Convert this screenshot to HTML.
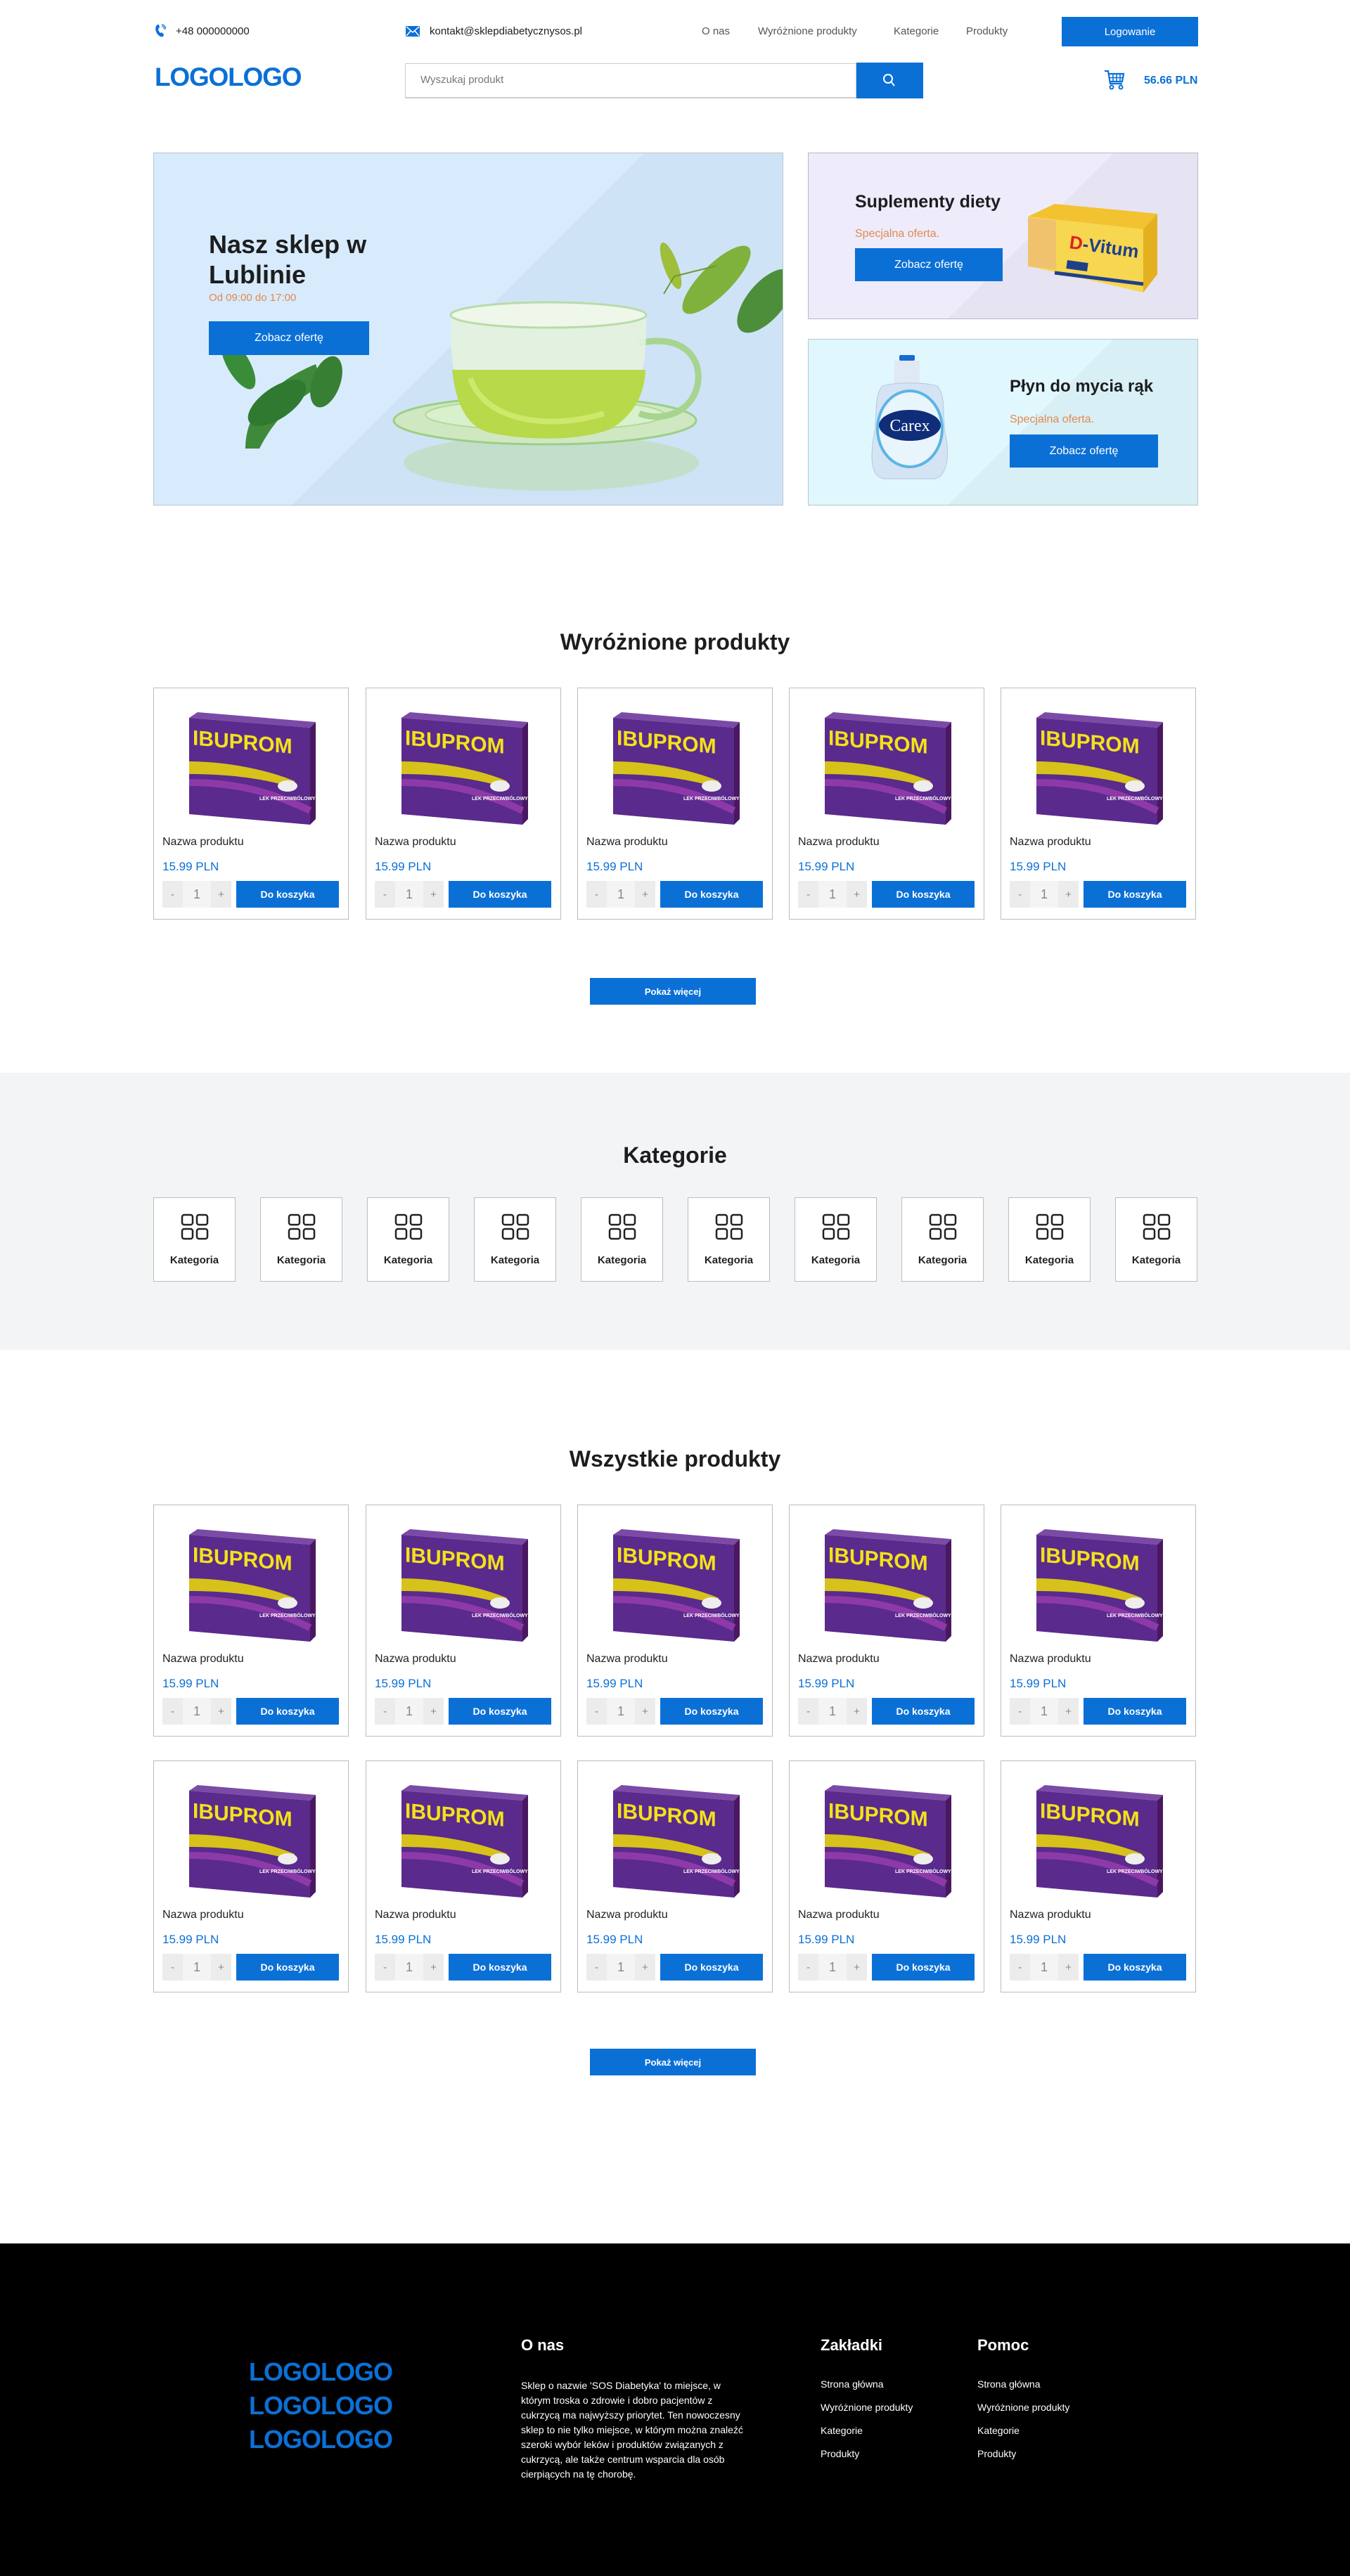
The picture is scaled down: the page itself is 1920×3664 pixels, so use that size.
<!DOCTYPE html>
<html><head><meta charset="utf-8"><style>
*{margin:0;padding:0;box-sizing:border-box}
body{width:1920px;height:3664px;position:relative;background:#fff;font-family:"Liberation Sans",Arial,sans-serif;color:#1d1d1f;overflow:hidden}
.a{position:absolute}
.btn{position:absolute;background:#0b70d6;color:#fff;display:flex;align-items:center;justify-content:center;font-size:15px}
.nav{position:absolute;top:36px;font-size:15px;color:#555}
.card{position:absolute;width:278px;height:330px;border:1px solid #bdbdbd;background:#fff}
.card svg{position:absolute;left:50px;top:34px}
.card .n{position:absolute;left:12px;top:210px;font-size:16px;color:#222}
.card .p{position:absolute;left:12px;top:244px;font-size:17px;color:#0b70d6}
.card .m,.card .q,.card .pl{position:absolute;top:274px;height:38px;display:flex;align-items:center;justify-content:center;color:#888;font-size:15px}
.card .m{left:12px;width:29px;background:#ececec}
.card .q{left:41px;width:40px;background:#f4f4f4;font-size:18px}
.card .pl{left:81px;width:29px;background:#ececec}
.card .b{position:absolute;left:117px;top:274px;width:146px;height:38px;background:#0b70d6;color:#fff;font-size:14px;font-weight:bold;display:flex;align-items:center;justify-content:center}
.cat{position:absolute;top:1703px;width:117px;height:120px;border:1px solid #bdbdbd;background:#fff}
.cat svg{position:absolute;left:38px;top:22px}
.cat span{position:absolute;left:0;right:0;top:80px;text-align:center;font-size:15px;font-weight:bold;color:#222}
h2{position:absolute;left:0;width:1920px;text-align:center;font-size:32px;font-weight:600;color:#1d1d1f}
.fl{position:absolute;font-size:14px;color:#fff}
</style></head><body>

<svg class="a" style="left:220px;top:34px" width="16" height="20" viewBox="0 0 16 20"><path d="M4 1 C1 3 0 8 3 13 C6 18 10 19 12 18 L13 15 L10 12 L8 13 C6 11 5 9 5 7 L7 5 L6 1 Z" fill="#0b70d6"/><path d="M10 3 a5 5 0 0 1 4 5 M10 0.5 a8 8 0 0 1 6 7" stroke="#0b70d6" fill="none" stroke-width="1.2"/></svg>
<div class="a" style="left:250px;top:36px;font-size:15px">+48 000000000</div>
<svg class="a" style="left:577px;top:37px" width="20" height="15" viewBox="0 0 20 15"><rect width="20" height="15" fill="#0b70d6"/><path d="M1 1 L10 9 L19 1 M1 14 L7 7 M19 14 L13 7" stroke="#fff" stroke-width="1.5" fill="none"/></svg>
<div class="a" style="left:611px;top:36px;font-size:15px">kontakt@sklepdiabetycznysos.pl</div>
<div class="nav" style="left:998px">O nas</div>
<div class="nav" style="left:1078px">Wyróżnione produkty</div>
<div class="nav" style="left:1271px">Kategorie</div>
<div class="nav" style="left:1374px">Produkty</div>
<div class="btn" style="left:1510px;top:24px;width:194px;height:42px;font-size:15px">Logowanie</div>

<div class="a" style="left:220px;top:89px;font-size:37px;font-weight:bold;color:#0b70d6;letter-spacing:-1.2px">LOGOLOGO</div>
<div class="a" style="left:576px;top:90px;width:642px;height:50px;border:1px solid #ccc;border-bottom:2px solid #ccc"></div>
<div class="a" style="left:598px;top:105px;font-size:15px;color:#777">Wyszukaj produkt</div>
<div class="a" style="left:1218px;top:89px;width:95px;height:51px;background:#0b70d6"></div>
<svg class="a" style="left:1255px;top:104px" width="20" height="22" viewBox="0 0 20 22"><circle cx="8" cy="8" r="6" stroke="#fff" stroke-width="2" fill="none"/><path d="M12.5 12.5 L17 18" stroke="#fff" stroke-width="2"/></svg>
<svg class="a" style="left:1570px;top:99px" width="30" height="30" viewBox="0 0 30 30"><path d="M1 2 H6 L9 20 H26" stroke="#0b70d6" stroke-width="2.2" fill="none"/><path d="M7 6 H28 L26 17 H9" stroke="#0b70d6" stroke-width="2.2" fill="none"/><path d="M13 6 V17 M18 6 V17 M23 6 V17 M8 11.5 H27" stroke="#0b70d6" stroke-width="1.6"/><circle cx="11" cy="25" r="2.5" stroke="#0b70d6" stroke-width="2" fill="none"/><circle cx="24" cy="25" r="2.5" stroke="#0b70d6" stroke-width="2" fill="none"/></svg>
<div class="a" style="left:1627px;top:106px;font-size:16px;color:#0b70d6;font-weight:bold">56.66 PLN</div>

<div class="a" style="left:218px;top:217px;width:896px;height:502px;border:1px solid #b9c3cc;background:linear-gradient(135deg,#d8ebfd 0%,#d8ebfd 50%,#cfe3f6 50%,#cfe3f6 100%);overflow:hidden">
<svg class="a" style="left:0;top:0" width="896" height="502" viewBox="0 0 896 502">
<ellipse cx="565" cy="440" rx="210" ry="40" fill="#b8dba0" opacity="0.5"/>
<path d="M130 420 C130 360 180 320 230 300 L240 330 C200 350 170 380 150 420 Z" fill="#3f8a3a"/>
<ellipse cx="175" cy="355" rx="48" ry="22" transform="rotate(-35 175 355)" fill="#2f7a30"/>
<ellipse cx="120" cy="300" rx="40" ry="16" transform="rotate(60 120 300)" fill="#3a8d38"/>
<ellipse cx="245" cy="325" rx="38" ry="20" transform="rotate(-70 245 325)" fill="#377f32"/>
<ellipse cx="556" cy="380" rx="215" ry="34" fill="#cfe8c2" stroke="#9ccf86" stroke-width="3"/>
<ellipse cx="556" cy="372" rx="170" ry="22" fill="#d9f0cc" stroke="#b0d99a" stroke-width="2"/>
<path d="M690 270 C760 255 785 300 770 340 C755 375 715 380 690 370" stroke="#a7d48e" stroke-width="9" fill="none"/>
<path d="M422 230 C420 300 430 360 470 390 C520 410 600 410 650 390 C690 360 702 300 700 230 Z" fill="#e4f2df" opacity="0.9"/>
<path d="M424 308 C430 365 450 392 480 398 C540 410 610 408 650 392 C685 370 698 340 699 308 Z" fill="#b7d94a"/>
<path d="M450 320 C470 380 560 395 640 370" stroke="#d7ee7a" stroke-width="8" fill="none" opacity="0.7"/>
<ellipse cx="561" cy="230" rx="139" ry="18" fill="#eef7ea" stroke="#b7dca8" stroke-width="3"/>
<ellipse cx="800" cy="180" rx="65" ry="22" transform="rotate(-45 800 180)" fill="#7fb23d"/>
<ellipse cx="735" cy="160" rx="35" ry="10" transform="rotate(70 735 160)" fill="#9fbe3c"/>
<path d="M725 200 L740 175 L800 160" stroke="#6a9a30" stroke-width="2" fill="none"/>
<ellipse cx="870" cy="210" rx="55" ry="26" transform="rotate(-50 870 210)" fill="#4d8e3b"/>
</svg>
<div class="a" style="left:78px;top:108px;font-size:36px;font-weight:bold;line-height:43px;color:#1d1d1f">Nasz sklep w<br>Lublinie</div>
<div class="a" style="left:78px;top:197px;font-size:15px;color:#e08a4e">Od 09:00 do 17:00</div>
<div class="btn" style="left:78px;top:239px;width:228px;height:48px;font-size:16px">Zobacz ofertę</div>
</div>

<div class="a" style="left:1149px;top:217px;width:555px;height:237px;border:1px solid #b9b9c6;background:linear-gradient(135deg,#eeebfb 0%,#eeebfb 55%,#e6e3f3 55%);overflow:hidden">
<div class="a" style="left:66px;top:55px;font-size:25px;font-weight:bold">Suplementy diety</div>
<div class="a" style="left:66px;top:106px;font-size:16px;color:#e08a4e">Specjalna oferta.</div>
<div class="btn" style="left:66px;top:135px;width:210px;height:47px;font-size:16px">Zobacz ofertę</div>
<svg class="a" style="left:300px;top:60px" width="200" height="140" viewBox="0 0 200 140">
<polygon points="12,30 50,12 196,26 176,48" fill="#f2c230"/>
<polygon points="12,30 176,48 176,138 12,100" fill="#f7d650"/>
<polygon points="176,48 196,26 196,112 176,138" fill="#e3b020"/>
<rect x="12" y="30" width="40" height="70" fill="#f1c26e" transform="skewY(6)"/>
<text x="70" y="75" font-size="26" font-weight="bold" fill="#1f3f8a" transform="rotate(8 70 75)" font-family="Liberation Sans,sans-serif"><tspan fill="#e02020">D</tspan>-Vitum</text>
<rect x="68" y="92" width="30" height="12" fill="#1f3f8a" transform="rotate(8 68 92)"/>
<path d="M50 110 L176 126" stroke="#1f3f8a" stroke-width="5"/>
</svg>
</div>

<div class="a" style="left:1149px;top:482px;width:555px;height:237px;border:1px solid #b9c6c9;background:linear-gradient(135deg,#e0f7fe 0%,#e0f7fe 55%,#d8eff5 55%);overflow:hidden">
<svg class="a" style="left:84px;top:22px" width="120" height="180" viewBox="0 0 120 180">
<rect x="45" y="0" width="22" height="8" rx="2" fill="#1a6ad0"/>
<rect x="38" y="8" width="36" height="32" fill="#dfe9f3"/>
<path d="M20 45 C30 38 90 38 100 45 C112 60 105 90 112 120 C118 160 105 175 95 176 L25 176 C10 175 2 160 8 120 C15 90 8 60 20 45 Z" fill="#d4e4f4" stroke="#b4c8dc"/>
<ellipse cx="60" cy="105" rx="46" ry="54" fill="#e9f5fc" stroke="#5cb5e6" stroke-width="4"/>
<ellipse cx="60" cy="100" rx="44" ry="22" fill="#102d7a"/>
<text x="60" y="108" text-anchor="middle" font-size="24" fill="#fff" font-family="Liberation Serif,serif">Carex</text>
</svg>
<div class="a" style="left:286px;top:53px;font-size:24px;font-weight:bold">Płyn do mycia rąk</div>
<div class="a" style="left:286px;top:105px;font-size:16px;color:#e08a4e">Specjalna oferta.</div>
<div class="btn" style="left:286px;top:135px;width:211px;height:47px;font-size:16px">Zobacz ofertę</div>
</div>

<h2 style="top:895px">Wyróżnione produkty</h2>

<div class="card" style="left:218px;top:978px"><svg width="180" height="160" viewBox="0 0 180 160"><polygon points="0,8 12,0 180,14 172,22" fill="#7b4aa6"/><polygon points="0,8 172,22 172,160 0,145" fill="#5a2a8c"/><polygon points="172,22 180,14 180,152 172,160" fill="#4a1860"/><path d="M0 70 C60 70 120 85 150 98 L150 108 C110 95 60 88 0 88 Z" fill="#d6c21a"/><path d="M0 100 C70 100 120 115 172 140" stroke="#8d3aa8" stroke-width="10" fill="none"/><ellipse cx="140" cy="105" rx="14" ry="8" fill="#eee"/><text x="5" y="46" font-size="30" font-weight="900" fill="#f3e21a" font-family="Liberation Sans,sans-serif" transform="skewY(5)">IBUPROM</text><text x="100" y="125" font-size="7" fill="#fff" font-weight="bold" font-family="Liberation Sans,sans-serif">LEK PRZECIWBÓLOWY</text></svg><div class="n">Nazwa produktu</div><div class="p">15.99 PLN</div><div class="m">-</div><div class="q">1</div><div class="pl">+</div><div class="b">Do koszyka</div></div>
<div class="card" style="left:520px;top:978px"><svg width="180" height="160" viewBox="0 0 180 160"><polygon points="0,8 12,0 180,14 172,22" fill="#7b4aa6"/><polygon points="0,8 172,22 172,160 0,145" fill="#5a2a8c"/><polygon points="172,22 180,14 180,152 172,160" fill="#4a1860"/><path d="M0 70 C60 70 120 85 150 98 L150 108 C110 95 60 88 0 88 Z" fill="#d6c21a"/><path d="M0 100 C70 100 120 115 172 140" stroke="#8d3aa8" stroke-width="10" fill="none"/><ellipse cx="140" cy="105" rx="14" ry="8" fill="#eee"/><text x="5" y="46" font-size="30" font-weight="900" fill="#f3e21a" font-family="Liberation Sans,sans-serif" transform="skewY(5)">IBUPROM</text><text x="100" y="125" font-size="7" fill="#fff" font-weight="bold" font-family="Liberation Sans,sans-serif">LEK PRZECIWBÓLOWY</text></svg><div class="n">Nazwa produktu</div><div class="p">15.99 PLN</div><div class="m">-</div><div class="q">1</div><div class="pl">+</div><div class="b">Do koszyka</div></div>
<div class="card" style="left:821px;top:978px"><svg width="180" height="160" viewBox="0 0 180 160"><polygon points="0,8 12,0 180,14 172,22" fill="#7b4aa6"/><polygon points="0,8 172,22 172,160 0,145" fill="#5a2a8c"/><polygon points="172,22 180,14 180,152 172,160" fill="#4a1860"/><path d="M0 70 C60 70 120 85 150 98 L150 108 C110 95 60 88 0 88 Z" fill="#d6c21a"/><path d="M0 100 C70 100 120 115 172 140" stroke="#8d3aa8" stroke-width="10" fill="none"/><ellipse cx="140" cy="105" rx="14" ry="8" fill="#eee"/><text x="5" y="46" font-size="30" font-weight="900" fill="#f3e21a" font-family="Liberation Sans,sans-serif" transform="skewY(5)">IBUPROM</text><text x="100" y="125" font-size="7" fill="#fff" font-weight="bold" font-family="Liberation Sans,sans-serif">LEK PRZECIWBÓLOWY</text></svg><div class="n">Nazwa produktu</div><div class="p">15.99 PLN</div><div class="m">-</div><div class="q">1</div><div class="pl">+</div><div class="b">Do koszyka</div></div>
<div class="card" style="left:1122px;top:978px"><svg width="180" height="160" viewBox="0 0 180 160"><polygon points="0,8 12,0 180,14 172,22" fill="#7b4aa6"/><polygon points="0,8 172,22 172,160 0,145" fill="#5a2a8c"/><polygon points="172,22 180,14 180,152 172,160" fill="#4a1860"/><path d="M0 70 C60 70 120 85 150 98 L150 108 C110 95 60 88 0 88 Z" fill="#d6c21a"/><path d="M0 100 C70 100 120 115 172 140" stroke="#8d3aa8" stroke-width="10" fill="none"/><ellipse cx="140" cy="105" rx="14" ry="8" fill="#eee"/><text x="5" y="46" font-size="30" font-weight="900" fill="#f3e21a" font-family="Liberation Sans,sans-serif" transform="skewY(5)">IBUPROM</text><text x="100" y="125" font-size="7" fill="#fff" font-weight="bold" font-family="Liberation Sans,sans-serif">LEK PRZECIWBÓLOWY</text></svg><div class="n">Nazwa produktu</div><div class="p">15.99 PLN</div><div class="m">-</div><div class="q">1</div><div class="pl">+</div><div class="b">Do koszyka</div></div>
<div class="card" style="left:1423px;top:978px"><svg width="180" height="160" viewBox="0 0 180 160"><polygon points="0,8 12,0 180,14 172,22" fill="#7b4aa6"/><polygon points="0,8 172,22 172,160 0,145" fill="#5a2a8c"/><polygon points="172,22 180,14 180,152 172,160" fill="#4a1860"/><path d="M0 70 C60 70 120 85 150 98 L150 108 C110 95 60 88 0 88 Z" fill="#d6c21a"/><path d="M0 100 C70 100 120 115 172 140" stroke="#8d3aa8" stroke-width="10" fill="none"/><ellipse cx="140" cy="105" rx="14" ry="8" fill="#eee"/><text x="5" y="46" font-size="30" font-weight="900" fill="#f3e21a" font-family="Liberation Sans,sans-serif" transform="skewY(5)">IBUPROM</text><text x="100" y="125" font-size="7" fill="#fff" font-weight="bold" font-family="Liberation Sans,sans-serif">LEK PRZECIWBÓLOWY</text></svg><div class="n">Nazwa produktu</div><div class="p">15.99 PLN</div><div class="m">-</div><div class="q">1</div><div class="pl">+</div><div class="b">Do koszyka</div></div>

<div class="btn" style="left:839px;top:1391px;width:236px;height:38px;font-size:13px;font-weight:bold">Pokaż więcej</div>

<div class="a" style="left:0;top:1526px;width:1920px;height:394px;background:#f3f4f6"></div>
<h2 style="top:1625px">Kategorie</h2>
<div class="cat" style="left:218px"><svg width="40" height="38" viewBox="0 0 40 38"><rect x="2" y="2" width="15" height="14" rx="3" stroke="#222" stroke-width="2.5" fill="none"/><rect x="23" y="2" width="15" height="14" rx="3" stroke="#222" stroke-width="2.5" fill="none"/><rect x="2" y="22" width="15" height="14" rx="3" stroke="#222" stroke-width="2.5" fill="none"/><rect x="23" y="22" width="15" height="14" rx="3" stroke="#222" stroke-width="2.5" fill="none"/></svg><span>Kategoria</span></div>
<div class="cat" style="left:370px"><svg width="40" height="38" viewBox="0 0 40 38"><rect x="2" y="2" width="15" height="14" rx="3" stroke="#222" stroke-width="2.5" fill="none"/><rect x="23" y="2" width="15" height="14" rx="3" stroke="#222" stroke-width="2.5" fill="none"/><rect x="2" y="22" width="15" height="14" rx="3" stroke="#222" stroke-width="2.5" fill="none"/><rect x="23" y="22" width="15" height="14" rx="3" stroke="#222" stroke-width="2.5" fill="none"/></svg><span>Kategoria</span></div>
<div class="cat" style="left:522px"><svg width="40" height="38" viewBox="0 0 40 38"><rect x="2" y="2" width="15" height="14" rx="3" stroke="#222" stroke-width="2.5" fill="none"/><rect x="23" y="2" width="15" height="14" rx="3" stroke="#222" stroke-width="2.5" fill="none"/><rect x="2" y="22" width="15" height="14" rx="3" stroke="#222" stroke-width="2.5" fill="none"/><rect x="23" y="22" width="15" height="14" rx="3" stroke="#222" stroke-width="2.5" fill="none"/></svg><span>Kategoria</span></div>
<div class="cat" style="left:674px"><svg width="40" height="38" viewBox="0 0 40 38"><rect x="2" y="2" width="15" height="14" rx="3" stroke="#222" stroke-width="2.5" fill="none"/><rect x="23" y="2" width="15" height="14" rx="3" stroke="#222" stroke-width="2.5" fill="none"/><rect x="2" y="22" width="15" height="14" rx="3" stroke="#222" stroke-width="2.5" fill="none"/><rect x="23" y="22" width="15" height="14" rx="3" stroke="#222" stroke-width="2.5" fill="none"/></svg><span>Kategoria</span></div>
<div class="cat" style="left:826px"><svg width="40" height="38" viewBox="0 0 40 38"><rect x="2" y="2" width="15" height="14" rx="3" stroke="#222" stroke-width="2.5" fill="none"/><rect x="23" y="2" width="15" height="14" rx="3" stroke="#222" stroke-width="2.5" fill="none"/><rect x="2" y="22" width="15" height="14" rx="3" stroke="#222" stroke-width="2.5" fill="none"/><rect x="23" y="22" width="15" height="14" rx="3" stroke="#222" stroke-width="2.5" fill="none"/></svg><span>Kategoria</span></div>
<div class="cat" style="left:978px"><svg width="40" height="38" viewBox="0 0 40 38"><rect x="2" y="2" width="15" height="14" rx="3" stroke="#222" stroke-width="2.5" fill="none"/><rect x="23" y="2" width="15" height="14" rx="3" stroke="#222" stroke-width="2.5" fill="none"/><rect x="2" y="22" width="15" height="14" rx="3" stroke="#222" stroke-width="2.5" fill="none"/><rect x="23" y="22" width="15" height="14" rx="3" stroke="#222" stroke-width="2.5" fill="none"/></svg><span>Kategoria</span></div>
<div class="cat" style="left:1130px"><svg width="40" height="38" viewBox="0 0 40 38"><rect x="2" y="2" width="15" height="14" rx="3" stroke="#222" stroke-width="2.5" fill="none"/><rect x="23" y="2" width="15" height="14" rx="3" stroke="#222" stroke-width="2.5" fill="none"/><rect x="2" y="22" width="15" height="14" rx="3" stroke="#222" stroke-width="2.5" fill="none"/><rect x="23" y="22" width="15" height="14" rx="3" stroke="#222" stroke-width="2.5" fill="none"/></svg><span>Kategoria</span></div>
<div class="cat" style="left:1282px"><svg width="40" height="38" viewBox="0 0 40 38"><rect x="2" y="2" width="15" height="14" rx="3" stroke="#222" stroke-width="2.5" fill="none"/><rect x="23" y="2" width="15" height="14" rx="3" stroke="#222" stroke-width="2.5" fill="none"/><rect x="2" y="22" width="15" height="14" rx="3" stroke="#222" stroke-width="2.5" fill="none"/><rect x="23" y="22" width="15" height="14" rx="3" stroke="#222" stroke-width="2.5" fill="none"/></svg><span>Kategoria</span></div>
<div class="cat" style="left:1434px"><svg width="40" height="38" viewBox="0 0 40 38"><rect x="2" y="2" width="15" height="14" rx="3" stroke="#222" stroke-width="2.5" fill="none"/><rect x="23" y="2" width="15" height="14" rx="3" stroke="#222" stroke-width="2.5" fill="none"/><rect x="2" y="22" width="15" height="14" rx="3" stroke="#222" stroke-width="2.5" fill="none"/><rect x="23" y="22" width="15" height="14" rx="3" stroke="#222" stroke-width="2.5" fill="none"/></svg><span>Kategoria</span></div>
<div class="cat" style="left:1586px"><svg width="40" height="38" viewBox="0 0 40 38"><rect x="2" y="2" width="15" height="14" rx="3" stroke="#222" stroke-width="2.5" fill="none"/><rect x="23" y="2" width="15" height="14" rx="3" stroke="#222" stroke-width="2.5" fill="none"/><rect x="2" y="22" width="15" height="14" rx="3" stroke="#222" stroke-width="2.5" fill="none"/><rect x="23" y="22" width="15" height="14" rx="3" stroke="#222" stroke-width="2.5" fill="none"/></svg><span>Kategoria</span></div>

<h2 style="top:2057px">Wszystkie produkty</h2>

<div class="card" style="left:218px;top:2140px"><svg width="180" height="160" viewBox="0 0 180 160"><polygon points="0,8 12,0 180,14 172,22" fill="#7b4aa6"/><polygon points="0,8 172,22 172,160 0,145" fill="#5a2a8c"/><polygon points="172,22 180,14 180,152 172,160" fill="#4a1860"/><path d="M0 70 C60 70 120 85 150 98 L150 108 C110 95 60 88 0 88 Z" fill="#d6c21a"/><path d="M0 100 C70 100 120 115 172 140" stroke="#8d3aa8" stroke-width="10" fill="none"/><ellipse cx="140" cy="105" rx="14" ry="8" fill="#eee"/><text x="5" y="46" font-size="30" font-weight="900" fill="#f3e21a" font-family="Liberation Sans,sans-serif" transform="skewY(5)">IBUPROM</text><text x="100" y="125" font-size="7" fill="#fff" font-weight="bold" font-family="Liberation Sans,sans-serif">LEK PRZECIWBÓLOWY</text></svg><div class="n">Nazwa produktu</div><div class="p">15.99 PLN</div><div class="m">-</div><div class="q">1</div><div class="pl">+</div><div class="b">Do koszyka</div></div>
<div class="card" style="left:520px;top:2140px"><svg width="180" height="160" viewBox="0 0 180 160"><polygon points="0,8 12,0 180,14 172,22" fill="#7b4aa6"/><polygon points="0,8 172,22 172,160 0,145" fill="#5a2a8c"/><polygon points="172,22 180,14 180,152 172,160" fill="#4a1860"/><path d="M0 70 C60 70 120 85 150 98 L150 108 C110 95 60 88 0 88 Z" fill="#d6c21a"/><path d="M0 100 C70 100 120 115 172 140" stroke="#8d3aa8" stroke-width="10" fill="none"/><ellipse cx="140" cy="105" rx="14" ry="8" fill="#eee"/><text x="5" y="46" font-size="30" font-weight="900" fill="#f3e21a" font-family="Liberation Sans,sans-serif" transform="skewY(5)">IBUPROM</text><text x="100" y="125" font-size="7" fill="#fff" font-weight="bold" font-family="Liberation Sans,sans-serif">LEK PRZECIWBÓLOWY</text></svg><div class="n">Nazwa produktu</div><div class="p">15.99 PLN</div><div class="m">-</div><div class="q">1</div><div class="pl">+</div><div class="b">Do koszyka</div></div>
<div class="card" style="left:821px;top:2140px"><svg width="180" height="160" viewBox="0 0 180 160"><polygon points="0,8 12,0 180,14 172,22" fill="#7b4aa6"/><polygon points="0,8 172,22 172,160 0,145" fill="#5a2a8c"/><polygon points="172,22 180,14 180,152 172,160" fill="#4a1860"/><path d="M0 70 C60 70 120 85 150 98 L150 108 C110 95 60 88 0 88 Z" fill="#d6c21a"/><path d="M0 100 C70 100 120 115 172 140" stroke="#8d3aa8" stroke-width="10" fill="none"/><ellipse cx="140" cy="105" rx="14" ry="8" fill="#eee"/><text x="5" y="46" font-size="30" font-weight="900" fill="#f3e21a" font-family="Liberation Sans,sans-serif" transform="skewY(5)">IBUPROM</text><text x="100" y="125" font-size="7" fill="#fff" font-weight="bold" font-family="Liberation Sans,sans-serif">LEK PRZECIWBÓLOWY</text></svg><div class="n">Nazwa produktu</div><div class="p">15.99 PLN</div><div class="m">-</div><div class="q">1</div><div class="pl">+</div><div class="b">Do koszyka</div></div>
<div class="card" style="left:1122px;top:2140px"><svg width="180" height="160" viewBox="0 0 180 160"><polygon points="0,8 12,0 180,14 172,22" fill="#7b4aa6"/><polygon points="0,8 172,22 172,160 0,145" fill="#5a2a8c"/><polygon points="172,22 180,14 180,152 172,160" fill="#4a1860"/><path d="M0 70 C60 70 120 85 150 98 L150 108 C110 95 60 88 0 88 Z" fill="#d6c21a"/><path d="M0 100 C70 100 120 115 172 140" stroke="#8d3aa8" stroke-width="10" fill="none"/><ellipse cx="140" cy="105" rx="14" ry="8" fill="#eee"/><text x="5" y="46" font-size="30" font-weight="900" fill="#f3e21a" font-family="Liberation Sans,sans-serif" transform="skewY(5)">IBUPROM</text><text x="100" y="125" font-size="7" fill="#fff" font-weight="bold" font-family="Liberation Sans,sans-serif">LEK PRZECIWBÓLOWY</text></svg><div class="n">Nazwa produktu</div><div class="p">15.99 PLN</div><div class="m">-</div><div class="q">1</div><div class="pl">+</div><div class="b">Do koszyka</div></div>
<div class="card" style="left:1423px;top:2140px"><svg width="180" height="160" viewBox="0 0 180 160"><polygon points="0,8 12,0 180,14 172,22" fill="#7b4aa6"/><polygon points="0,8 172,22 172,160 0,145" fill="#5a2a8c"/><polygon points="172,22 180,14 180,152 172,160" fill="#4a1860"/><path d="M0 70 C60 70 120 85 150 98 L150 108 C110 95 60 88 0 88 Z" fill="#d6c21a"/><path d="M0 100 C70 100 120 115 172 140" stroke="#8d3aa8" stroke-width="10" fill="none"/><ellipse cx="140" cy="105" rx="14" ry="8" fill="#eee"/><text x="5" y="46" font-size="30" font-weight="900" fill="#f3e21a" font-family="Liberation Sans,sans-serif" transform="skewY(5)">IBUPROM</text><text x="100" y="125" font-size="7" fill="#fff" font-weight="bold" font-family="Liberation Sans,sans-serif">LEK PRZECIWBÓLOWY</text></svg><div class="n">Nazwa produktu</div><div class="p">15.99 PLN</div><div class="m">-</div><div class="q">1</div><div class="pl">+</div><div class="b">Do koszyka</div></div>

<div class="card" style="left:218px;top:2504px"><svg width="180" height="160" viewBox="0 0 180 160"><polygon points="0,8 12,0 180,14 172,22" fill="#7b4aa6"/><polygon points="0,8 172,22 172,160 0,145" fill="#5a2a8c"/><polygon points="172,22 180,14 180,152 172,160" fill="#4a1860"/><path d="M0 70 C60 70 120 85 150 98 L150 108 C110 95 60 88 0 88 Z" fill="#d6c21a"/><path d="M0 100 C70 100 120 115 172 140" stroke="#8d3aa8" stroke-width="10" fill="none"/><ellipse cx="140" cy="105" rx="14" ry="8" fill="#eee"/><text x="5" y="46" font-size="30" font-weight="900" fill="#f3e21a" font-family="Liberation Sans,sans-serif" transform="skewY(5)">IBUPROM</text><text x="100" y="125" font-size="7" fill="#fff" font-weight="bold" font-family="Liberation Sans,sans-serif">LEK PRZECIWBÓLOWY</text></svg><div class="n">Nazwa produktu</div><div class="p">15.99 PLN</div><div class="m">-</div><div class="q">1</div><div class="pl">+</div><div class="b">Do koszyka</div></div>
<div class="card" style="left:520px;top:2504px"><svg width="180" height="160" viewBox="0 0 180 160"><polygon points="0,8 12,0 180,14 172,22" fill="#7b4aa6"/><polygon points="0,8 172,22 172,160 0,145" fill="#5a2a8c"/><polygon points="172,22 180,14 180,152 172,160" fill="#4a1860"/><path d="M0 70 C60 70 120 85 150 98 L150 108 C110 95 60 88 0 88 Z" fill="#d6c21a"/><path d="M0 100 C70 100 120 115 172 140" stroke="#8d3aa8" stroke-width="10" fill="none"/><ellipse cx="140" cy="105" rx="14" ry="8" fill="#eee"/><text x="5" y="46" font-size="30" font-weight="900" fill="#f3e21a" font-family="Liberation Sans,sans-serif" transform="skewY(5)">IBUPROM</text><text x="100" y="125" font-size="7" fill="#fff" font-weight="bold" font-family="Liberation Sans,sans-serif">LEK PRZECIWBÓLOWY</text></svg><div class="n">Nazwa produktu</div><div class="p">15.99 PLN</div><div class="m">-</div><div class="q">1</div><div class="pl">+</div><div class="b">Do koszyka</div></div>
<div class="card" style="left:821px;top:2504px"><svg width="180" height="160" viewBox="0 0 180 160"><polygon points="0,8 12,0 180,14 172,22" fill="#7b4aa6"/><polygon points="0,8 172,22 172,160 0,145" fill="#5a2a8c"/><polygon points="172,22 180,14 180,152 172,160" fill="#4a1860"/><path d="M0 70 C60 70 120 85 150 98 L150 108 C110 95 60 88 0 88 Z" fill="#d6c21a"/><path d="M0 100 C70 100 120 115 172 140" stroke="#8d3aa8" stroke-width="10" fill="none"/><ellipse cx="140" cy="105" rx="14" ry="8" fill="#eee"/><text x="5" y="46" font-size="30" font-weight="900" fill="#f3e21a" font-family="Liberation Sans,sans-serif" transform="skewY(5)">IBUPROM</text><text x="100" y="125" font-size="7" fill="#fff" font-weight="bold" font-family="Liberation Sans,sans-serif">LEK PRZECIWBÓLOWY</text></svg><div class="n">Nazwa produktu</div><div class="p">15.99 PLN</div><div class="m">-</div><div class="q">1</div><div class="pl">+</div><div class="b">Do koszyka</div></div>
<div class="card" style="left:1122px;top:2504px"><svg width="180" height="160" viewBox="0 0 180 160"><polygon points="0,8 12,0 180,14 172,22" fill="#7b4aa6"/><polygon points="0,8 172,22 172,160 0,145" fill="#5a2a8c"/><polygon points="172,22 180,14 180,152 172,160" fill="#4a1860"/><path d="M0 70 C60 70 120 85 150 98 L150 108 C110 95 60 88 0 88 Z" fill="#d6c21a"/><path d="M0 100 C70 100 120 115 172 140" stroke="#8d3aa8" stroke-width="10" fill="none"/><ellipse cx="140" cy="105" rx="14" ry="8" fill="#eee"/><text x="5" y="46" font-size="30" font-weight="900" fill="#f3e21a" font-family="Liberation Sans,sans-serif" transform="skewY(5)">IBUPROM</text><text x="100" y="125" font-size="7" fill="#fff" font-weight="bold" font-family="Liberation Sans,sans-serif">LEK PRZECIWBÓLOWY</text></svg><div class="n">Nazwa produktu</div><div class="p">15.99 PLN</div><div class="m">-</div><div class="q">1</div><div class="pl">+</div><div class="b">Do koszyka</div></div>
<div class="card" style="left:1423px;top:2504px"><svg width="180" height="160" viewBox="0 0 180 160"><polygon points="0,8 12,0 180,14 172,22" fill="#7b4aa6"/><polygon points="0,8 172,22 172,160 0,145" fill="#5a2a8c"/><polygon points="172,22 180,14 180,152 172,160" fill="#4a1860"/><path d="M0 70 C60 70 120 85 150 98 L150 108 C110 95 60 88 0 88 Z" fill="#d6c21a"/><path d="M0 100 C70 100 120 115 172 140" stroke="#8d3aa8" stroke-width="10" fill="none"/><ellipse cx="140" cy="105" rx="14" ry="8" fill="#eee"/><text x="5" y="46" font-size="30" font-weight="900" fill="#f3e21a" font-family="Liberation Sans,sans-serif" transform="skewY(5)">IBUPROM</text><text x="100" y="125" font-size="7" fill="#fff" font-weight="bold" font-family="Liberation Sans,sans-serif">LEK PRZECIWBÓLOWY</text></svg><div class="n">Nazwa produktu</div><div class="p">15.99 PLN</div><div class="m">-</div><div class="q">1</div><div class="pl">+</div><div class="b">Do koszyka</div></div>

<div class="btn" style="left:839px;top:2914px;width:236px;height:38px;font-size:13px;font-weight:bold">Pokaż więcej</div>

<div class="a" style="left:0;top:3191px;width:1920px;height:473px;background:#000"></div>
<div class="a" style="left:354px;top:3350px;font-size:36px;font-weight:bold;color:#0b70d6;line-height:48px;letter-spacing:-1px">LOGOLOGO<br>LOGOLOGO<br>LOGOLOGO</div>
<div class="a" style="left:741px;top:3323px;font-size:22px;font-weight:bold;color:#fff">O nas</div>
<div class="a" style="left:741px;top:3383px;width:318px;font-size:14px;line-height:21px;color:#fff">Sklep o nazwie 'SOS Diabetyka' to miejsce, w którym troska o zdrowie i dobro pacjentów z cukrzycą ma najwyższy priorytet. Ten nowoczesny sklep to nie tylko miejsce, w którym można znaleźć szeroki wybór leków i produktów związanych z cukrzycą, ale także centrum wsparcia dla osób cierpiących na tę chorobę.</div>
<div class="a" style="left:1167px;top:3323px;font-size:22px;font-weight:bold;color:#fff">Zakładki</div>
<div class="fl" style="left:1167px;top:3383px">Strona główna</div>
<div class="fl" style="left:1167px;top:3416px">Wyróżnione produkty</div>
<div class="fl" style="left:1167px;top:3449px">Kategorie</div>
<div class="fl" style="left:1167px;top:3482px">Produkty</div>
<div class="a" style="left:1390px;top:3323px;font-size:22px;font-weight:bold;color:#fff">Pomoc</div>
<div class="fl" style="left:1390px;top:3383px">Strona główna</div>
<div class="fl" style="left:1390px;top:3416px">Wyróżnione produkty</div>
<div class="fl" style="left:1390px;top:3449px">Kategorie</div>
<div class="fl" style="left:1390px;top:3482px">Produkty</div>
</body></html>
